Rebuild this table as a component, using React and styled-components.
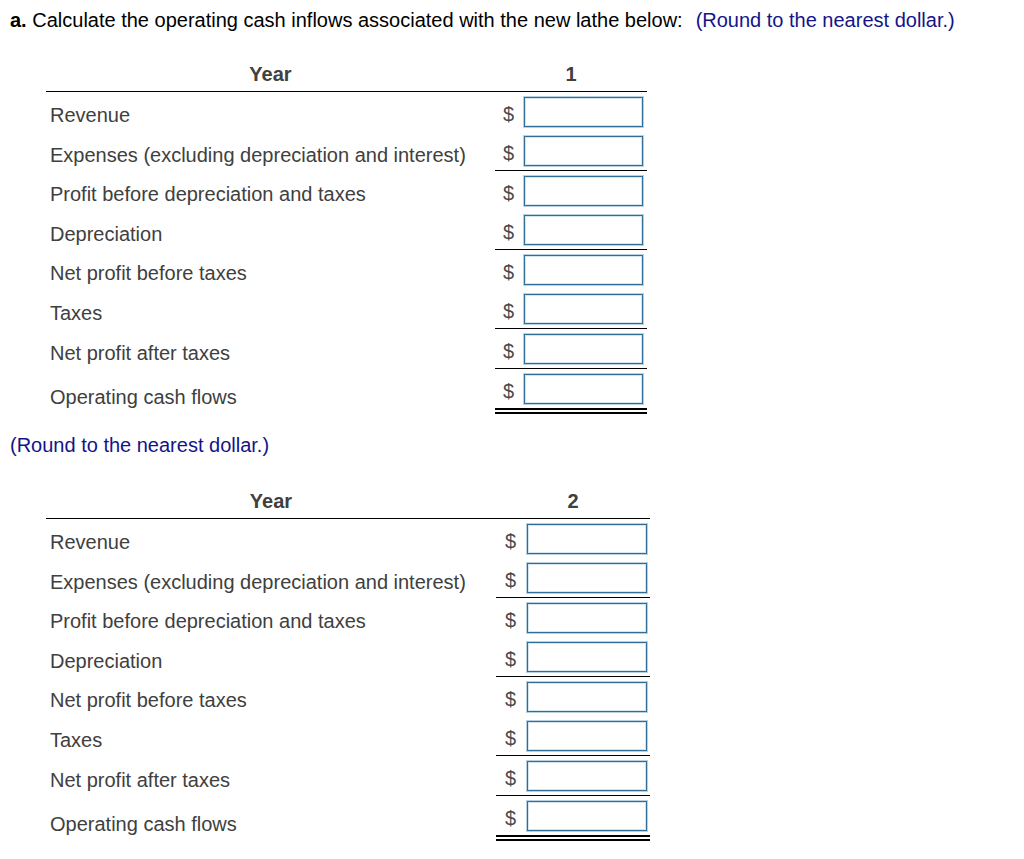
import styled, { createGlobalStyle } from "styled-components";

const GlobalStyle = createGlobalStyle`
  body {
    margin: 0;
    background: #ffffff;
    font-family: "Liberation Sans", Arial, sans-serif;
  }
`;

const StyledPage = styled.div`
  padding: 9px 10px 20px;
  font-size: 20px;
  color: #000000;
`;

const StyledTitle = styled.div`
  line-height: 23px;
  white-space: nowrap;
`;

const StyledBold = styled.span`
  font-weight: bold;
`;

const StyledHint = styled.span`
  color: #14148a;
  margin-left: ${(p) => (p.$inline ? "13px" : "0")};
`;

const StyledNote = styled.div`
  line-height: 23px;
  margin-top: 20px;
`;

const StyledTable = styled.div`
  margin-left: 36px;
  margin-top: ${(p) => p.$top}px;
  width: ${(p) => p.$label + p.$value}px;
  color: #404040;
`;

const StyledHeader = styled.div`
  display: grid;
  grid-template-columns: ${(p) => p.$label}px ${(p) => p.$value}px;
  border-bottom: 1px solid #000000;
  font-weight: bold;
  text-align: center;
  line-height: 23px;
  padding-bottom: 5px;
`;

const StyledRow = styled.div`
  display: grid;
  grid-template-columns: ${(p) => p.$label}px ${(p) => p.$value}px;
`;

const StyledLabel = styled.div`
  padding-left: 4px;
  display: flex;
  align-items: center;
  padding-top: ${(p) => (p.$low ? 11 : 8)}px;
  white-space: nowrap;
`;

const StyledValue = styled.div`
  display: flex;
  align-items: center;
  gap: ${(p) => p.$gap}px;
  padding: 5px 0 4px ${(p) => p.$pad}px;
  border-bottom: ${(p) =>
    p.$rule === "double"
      ? "6px double #000000"
      : p.$rule === "single"
      ? "1px solid #000000"
      : "0"};
`;

const StyledDollar = styled.span`
  color: #4a4a4a;
  line-height: 23px;
  padding-top: 5px;
`;

const StyledInput = styled.input`
  box-sizing: border-box;
  width: ${(p) => p.$width}px;
  height: 30px;
  margin: 0;
  border: 1px solid #2f6f97;
  box-shadow: 0 0 0 1px #b8d1e1, inset 0 0 0 1px #d5e5ef;
  background: #ffffff;
  outline: none;
`;

const rows = [
  { label: "Revenue" },
  { label: "Expenses (excluding depreciation and interest)", rule: "single" },
  { label: "Profit before depreciation and taxes" },
  { label: "Depreciation", rule: "single" },
  { label: "Net profit before taxes" },
  { label: "Taxes", rule: "single" },
  { label: "Net profit after taxes", rule: "single" },
  { label: "Operating cash flows", rule: "double", low: true },
];

const CashTable = (props) => {
  const { year, top, label, value, pad, gap, inputWidth } = props;

  return (
    <StyledTable $top={top} $label={label} $value={value}>
      <StyledHeader $label={label} $value={value}>
        <div>Year</div>
        <div>{year}</div>
      </StyledHeader>

      {rows.map((row) => (
        <StyledRow key={row.label} $label={label} $value={value}>
          <StyledLabel $low={row.low}>{row.label}</StyledLabel>
          <StyledValue $rule={row.rule} $pad={pad} $gap={gap}>
            <StyledDollar>$</StyledDollar>
            <StyledInput type="text" $width={inputWidth} />
          </StyledValue>
        </StyledRow>
      ))}
    </StyledTable>
  );
};

const App = () => {
  return (
    <StyledPage>
      <GlobalStyle />
      <StyledTitle>
        <StyledBold>a.</StyledBold> Calculate the operating cash inflows
        associated with the new lathe below:
        <StyledHint $inline>(Round to the nearest dollar.)</StyledHint>
      </StyledTitle>

      <CashTable
        year="1"
        top={31}
        label={449}
        value={152}
        pad={8}
        gap={10}
        inputWidth={119}
      />

      <StyledNote>
        <StyledHint>(Round to the nearest dollar.)</StyledHint>
      </StyledNote>

      <CashTable
        year="2"
        top={33}
        label={450}
        value={154}
        pad={9}
        gap={11}
        inputWidth={120}
      />
    </StyledPage>
  );
};

export default App;
